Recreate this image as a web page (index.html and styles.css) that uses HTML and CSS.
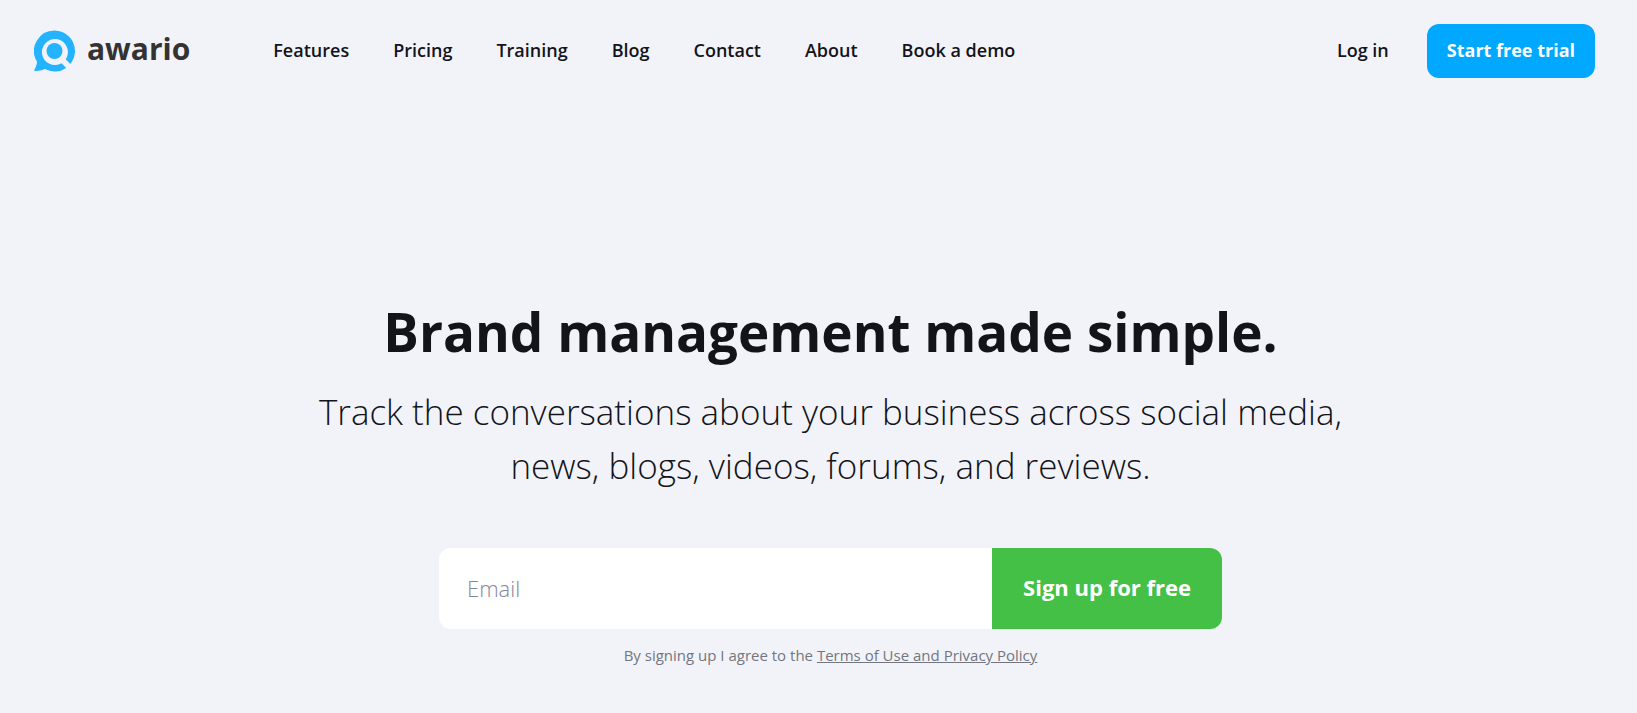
FILE: index.html
```
<!DOCTYPE html>
<html lang="en">
<head>
<meta charset="utf-8">
<meta name="viewport" content="width=device-width, initial-scale=1">
<title>Awario</title>
<link rel="stylesheet" href="styles.css">
</head>
<body>
<header class="header">
  <a class="logo" href="#">
    <svg class="logo-mark" viewBox="0 0 42 42" aria-hidden="true">
      <path class="logo-blue" d="M20.500 0.500A20.500 20.500 0 0 1 41 21C41 25.800 39.200 30.400 36.300 33.900L31.700 29.300A13 13 0 1 0 27.600 33.200L32.200 37.900A20.500 20.500 0 0 1 11 39.100C8 40.600 4.500 41 0.800 40.900C0.200 40.900 0 40.500 0.300 40C1.900 37.400 2.800 34.800 3 31.700A20.500 20.500 0 0 1 20.500 0.500Z"/>
      <circle class="logo-blue" cx="20.500" cy="21" r="8"/>
    </svg>
    <span class="logo-text">awario</span>
  </a>
  <nav class="nav">
    <a href="#">Features</a>
    <a href="#">Pricing</a>
    <a href="#">Training</a>
    <a href="#">Blog</a>
    <a href="#">Contact</a>
    <a href="#">About</a>
    <a href="#">Book a demo</a>
  </nav>
  <div class="account">
    <a class="login" href="#">Log in</a>
    <a class="trial" href="#">Start free trial</a>
  </div>
</header>
<main class="hero">
  <h1 class="title">Brand management made simple.</h1>
  <p class="subtitle">Track the conversations about your business across social media, news, blogs, videos, forums, and reviews.</p>
  <form class="signup">
    <input class="email" type="email" placeholder="Email" aria-label="Email">
    <button class="submit" type="submit">Sign up for free</button>
  </form>
  <p class="legal">By signing up I agree to the <a href="#">Terms of Use and Privacy Policy</a></p>
</main>
</body>
</html>
```
FILE: styles.css
```
* {
  box-sizing: border-box;
}

body {
  margin: 0;
  background: #f2f3f9;
  color: #13141a;
  font-family: "Open Sans", "Noto Sans", sans-serif;
}

a {
  color: inherit;
  text-decoration: none;
}

.header {
  display: flex;
  align-items: center;
  padding: 24px 42px 0 34px;
  font-size: 18px;
  line-height: 24px;
  font-weight: 600;
  white-space: nowrap;
}

.logo {
  display: flex;
  align-items: center;
  gap: 11px;
}

.logo-mark {
  width: 42px;
  height: 42px;
}

.logo-blue {
  fill: #24b3ff;
}

.logo-text {
  padding-bottom: 4px;
  color: #333;
  font-size: 30px;
  line-height: 38px;
  font-weight: 700;
}

.nav {
  display: flex;
  gap: 44px;
  margin-left: 83px;
  padding-bottom: 2px;
}

.account {
  display: flex;
  align-items: center;
  gap: 38px;
  margin-left: auto;
}

.login {
  padding-bottom: 2px;
}

.trial {
  padding: 14px 20px 16px;
  border-radius: 12px;
  background: #00a8ff;
  color: #fff;
  font-weight: 700;
}

.hero {
  display: flex;
  flex-direction: column;
  align-items: center;
  padding: 214px 24px 48px 48px;
  text-align: center;
}

.title {
  margin: 0;
  font-size: 53px;
  line-height: 80px;
  font-weight: 700;
}

.subtitle {
  max-width: 1060px;
  margin: 13px 0 55px;
  font-size: 35px;
  line-height: 54px;
  font-weight: 300;
}

.signup {
  display: flex;
  width: 100%;
  max-width: 783px;
}

.email,
.submit {
  height: 81px;
  border: 0;
  font-family: inherit;
  font-size: 22px;
}

.email {
  flex: 1;
  min-width: 0;
  padding: 0 28px 2px;
  border-radius: 12px 0 0 12px;
  background: #fff;
  color: #13141a;
  font-weight: 300;
}

.email::placeholder {
  color: #83879a;
  opacity: 1;
}

.submit {
  padding: 0 31px 4px;
  border-radius: 0 12px 12px 0;
  background: #45c046;
  color: #fff;
  font-weight: 700;
}

.legal {
  margin: 15px 0 0;
  color: #73767f;
  font-size: 15px;
  line-height: 22px;
}

.legal a {
  text-decoration: underline;
}
```
